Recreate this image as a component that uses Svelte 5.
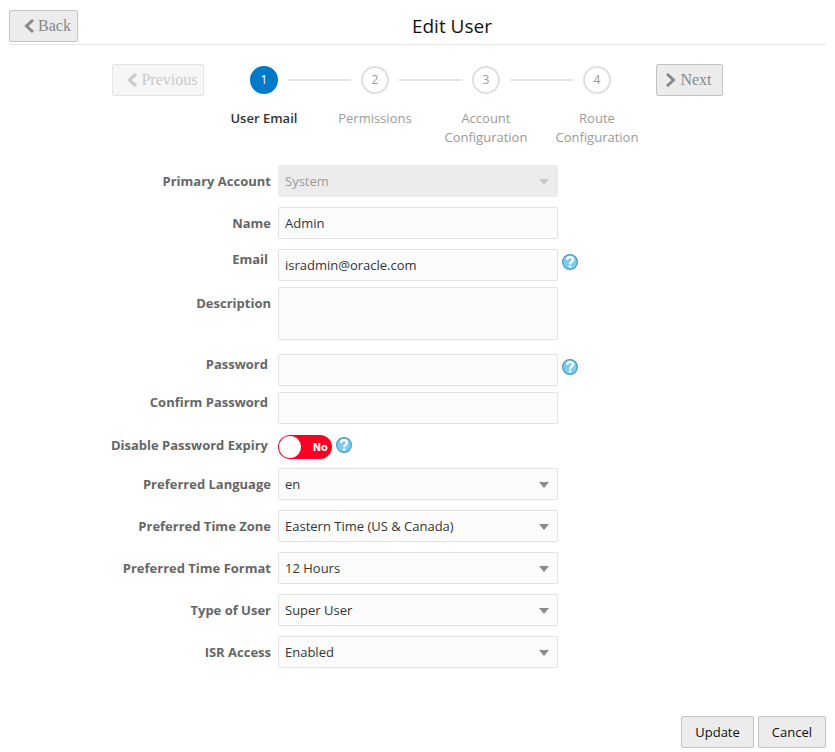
<script lang="ts">
  interface Field {
    id: string;
    label: string;
    type: 'select' | 'text' | 'email' | 'password' | 'textarea' | 'switch';
    value?: string;
    disabled?: boolean;
    help?: string;
    compact?: boolean;
  }

  const steps = ['User Email', 'Permissions', 'Account Configuration', 'Route Configuration'];

  const fields: Field[] = [
    { id: 'account', label: 'Primary Account', type: 'select', value: 'System', disabled: true },
    { id: 'name', label: 'Name', type: 'text', value: 'Admin' },
    { id: 'email', label: 'Email', type: 'email', value: 'isradmin@oracle.com', help: 'About email', compact: true },
    { id: 'description', label: 'Description', type: 'textarea' },
    { id: 'password', label: 'Password', type: 'password', help: 'About password', compact: true },
    { id: 'confirm', label: 'Confirm Password', type: 'password', compact: true },
    { id: 'expiry', label: 'Disable Password Expiry', type: 'switch', help: 'About password expiry' },
    { id: 'language', label: 'Preferred Language', type: 'select', value: 'en' },
    { id: 'timezone', label: 'Preferred Time Zone', type: 'select', value: 'Eastern Time (US & Canada)' },
    { id: 'format', label: 'Preferred Time Format', type: 'select', value: '12 Hours' },
    { id: 'type', label: 'Type of User', type: 'select', value: 'Super User' },
    { id: 'access', label: 'ISR Access', type: 'select', value: 'Enabled' }
  ];

  let current = $state(0);
  let disableExpiry = $state(false);
</script>

{#snippet chevron(direction: string)}
  <svg class="chevron" width="10" height="14" viewBox="0 0 10 14" fill="none" stroke="currentColor" stroke-width="3" aria-hidden="true">
    <path d={direction === 'left' ? 'M9 1 2.5 7 9 13' : 'M1 1 7.5 7 1 13'} />
  </svg>
{/snippet}

<main class="page">
  <header>
    <button class="btn nav back">{@render chevron('left')}Back</button>
    <h1>Edit User</h1>
  </header>

  <nav class="wizard" aria-label="Steps">
    <button class="btn nav back" disabled={current === 0} onclick={() => current--}>
      {@render chevron('left')}Previous
    </button>
    <ol>
      {#each steps as step, i}
        <li class:active={i === current} aria-current={i === current ? 'step' : undefined}>
          <div class="track"><span class="circle">{i + 1}</span></div>
          <span class="step-label">{step}</span>
        </li>
      {/each}
    </ol>
    <button class="btn nav" disabled={current === steps.length - 1} onclick={() => current++}>
      {@render chevron('right')}Next
    </button>
  </nav>

  <form onsubmit={(e) => e.preventDefault()}>
    {#each fields as field (field.id)}
      <div class="row" class:compact={field.compact} class:tall={field.type === 'textarea'} class:switch={field.type === 'switch'}>
        <label for={field.id}>{field.label}</label>
        <div class="control">
          {#if field.type === 'select'}
            <div class="select-wrap" class:disabled={field.disabled}>
              <select id={field.id} disabled={field.disabled}>
                <option>{field.value}</option>
              </select>
            </div>
          {:else if field.type === 'textarea'}
            <textarea id={field.id}></textarea>
          {:else if field.type === 'switch'}
            <div class="toggle" class:on={disableExpiry}>
              <input id={field.id} type="checkbox" role="switch" bind:checked={disableExpiry} />
              <span class="knob"></span>
              <span class="state">{disableExpiry ? 'Yes' : 'No'}</span>
            </div>
          {:else}
            <input class="text-input" id={field.id} type={field.type} value={field.value ?? ''} />
          {/if}
          {#if field.help}
            <button class="help" type="button" aria-label={field.help}>
              <svg width="16" height="16" viewBox="0 0 16 16" fill="none" aria-hidden="true">
                <circle cx="8" cy="8" r="7.4" fill="#7accf3" stroke="#4f9cc0" stroke-width="1.2" />
                <path d="M5 6C5 4 6.3 3.2 8 3.2c1.8 0 3 .9 3 2.4 0 2-2.9 2.2-2.9 4.6" stroke="#fff" stroke-width="2.2" />
                <circle cx="8.1" cy="12.6" r="1.3" fill="#fff" />
              </svg>
            </button>
          {/if}
        </div>
      </div>
    {/each}

    <footer>
      <button class="btn" type="submit">Update</button>
      <button class="btn" type="button">Cancel</button>
    </footer>
  </form>
</main>

<style>
  :global(body) {
    margin: 0;
    background: #fff;
  }

  .page {
    padding: 10px 9px 4px;
    font-family: 'Segoe UI', 'Open Sans', 'Noto Sans', sans-serif;
    font-size: 13px;
    color: #333;
  }

  .page :is(button, input, select, textarea) {
    box-sizing: border-box;
    margin: 0;
    font: inherit;
  }

  header {
    display: flex;
    align-items: center;
    padding-bottom: 2px;
    border-bottom: 1px solid #e4e4e4;
  }

  h1 {
    flex: 1;
    margin: 0;
    font-size: 19px;
    font-weight: 500;
    line-height: 30px;
    text-align: center;
    color: #111;
  }

  .btn {
    height: 32px;
    padding: 0 13px;
    border: 1px solid #c4c4c4;
    border-radius: 2px;
    background: #ececec;
    color: #111;
    cursor: pointer;
  }

  .page .btn.nav {
    display: flex;
    flex-shrink: 0;
    align-items: center;
    gap: 4px;
    padding: 0 10px 0 9px;
    font-family: 'Liberation Serif', 'Times New Roman', serif;
    font-size: 16px;
    color: #85898c;
  }

  .page .btn.back {
    padding: 0 6px 0 14px;
  }

  .btn:disabled {
    opacity: 0.45;
    cursor: default;
  }

  .wizard {
    display: flex;
    justify-content: center;
    align-items: flex-start;
    gap: 4px;
    padding-top: 19px;
  }

  ol {
    display: flex;
    margin: 0;
    padding: 0;
    list-style: none;
  }

  li {
    display: flex;
    flex-direction: column;
    align-items: center;
    width: 111px;
    padding-top: 2px;
    color: #9a9a9a;
    text-align: center;
  }

  .track {
    position: relative;
    display: flex;
    justify-content: center;
    width: 100%;
  }

  /* connector to the next step */
  li:not(:last-child) .track::after {
    content: '';
    position: absolute;
    top: 13px;
    left: calc(50% + 24px);
    width: calc(100% - 48px);
    height: 2px;
    background: #e4e4e4;
  }

  .circle {
    box-sizing: border-box;
    width: 28px;
    height: 28px;
    border: 2px solid #e0e0e0;
    border-radius: 50%;
    font-size: 12px;
    line-height: 24px;
  }

  .step-label {
    margin-top: 15px;
    line-height: 19px;
  }

  .active .circle {
    border-color: #0079c8;
    background: #0079c8;
    color: #fff;
  }

  .active .step-label {
    font-weight: 600;
    color: #333;
  }

  form {
    padding-top: 18px;
  }

  .row {
    display: grid;
    grid-template-columns: minmax(auto, 269px) 1fr;
    margin-bottom: 10px;
  }

  label {
    padding-right: 7px;
    font-weight: 700;
    line-height: 32px;
    text-align: right;
    color: #666;
  }

  .compact {
    margin-bottom: 6px;
  }

  .compact label,
  .switch label {
    padding-right: 10px;
    line-height: 20px;
  }

  .tall {
    margin-bottom: 14px;
  }

  .switch {
    margin-bottom: 9px;
    padding-top: 5px;
  }

  .control {
    display: flex;
    align-items: flex-start;
    gap: 4px;
    min-width: 0;
  }

  .select-wrap,
  .text-input,
  textarea {
    flex: 0 1 280px;
    min-width: 0;
  }

  .text-input,
  select,
  textarea {
    display: block;
    height: 32px;
    padding: 0 6px;
    border: 1px solid #e2e2e2;
    border-radius: 2px;
    background: #fcfcfc;
    color: #333;
  }

  textarea {
    height: 53px;
    resize: none;
  }

  .select-wrap {
    position: relative;
  }

  .select-wrap::after {
    content: '';
    position: absolute;
    top: 14px;
    right: 9px;
    border: 5px solid transparent;
    border-top: 6px solid #878b8e;
    border-bottom: 0;
    pointer-events: none;
  }

  select {
    width: 100%;
    appearance: none;
  }

  select:disabled {
    border-color: #ececec;
    background: #ececec;
    color: #999;
    opacity: 1;
  }

  .select-wrap.disabled::after {
    border-top-color: #c6c6c6;
  }

  .page .help {
    display: flex;
    flex-shrink: 0;
    margin-top: 5px;
    padding: 0;
    border: 0;
    background: none;
    cursor: pointer;
  }

  .page .switch .help {
    margin-top: 2px;
  }

  .toggle {
    position: relative;
    display: flex;
    box-sizing: border-box;
    align-items: center;
    justify-content: space-between;
    width: 54px;
    height: 24px;
    padding: 1px 4px 1px 1px;
    border-radius: 12px;
    background: #fc0023;
    color: #fff;
  }

  .toggle input {
    position: absolute;
    inset: 0;
    width: 100%;
    height: 100%;
    opacity: 0;
    cursor: pointer;
  }

  .toggle.on {
    flex-direction: row-reverse;
    padding: 1px 1px 1px 4px;
    background: #2e9e4f;
  }

  .knob {
    width: 22px;
    height: 22px;
    border-radius: 50%;
    background: #fff;
  }

  .state {
    font-family: 'DejaVu Sans', Verdana, sans-serif;
    font-size: 10px;
    font-weight: 700;
  }

  footer {
    display: flex;
    justify-content: flex-end;
    gap: 4px;
    padding-top: 38px;
  }
</style>
